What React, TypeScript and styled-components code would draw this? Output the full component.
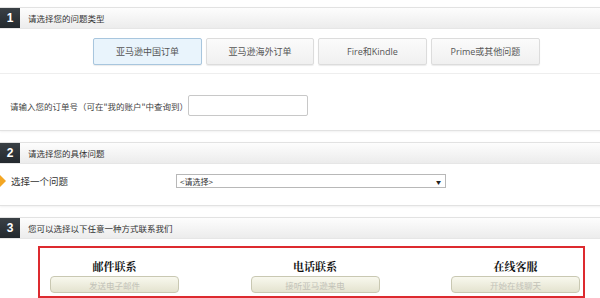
import React from 'react';
import styled, { createGlobalStyle } from 'styled-components';

const GlobalStyle = createGlobalStyle`
  html, body {
    margin: 0;
    padding: 0;
    background: #fff;
    overflow: hidden;
  }
  body {
    font-family: "Liberation Sans", "Noto Sans CJK SC", sans-serif;
    font-size: 10px;
    color: #333;
  }
`;

const Page = styled.div`
  width: 612px;
  padding-top: 7px;
  display: flex;
  flex-direction: column;
  row-gap: 11px;
`;

const Section = styled.div`
  border: 1px solid #e2e2e2;
  border-right: none;
  border-left: none;
  box-shadow: 0 1px 2px rgba(0, 0, 0, 0.06);
  background: #fff;
`;

const Header = styled.div`
  height: 20px;
  display: flex;
  align-items: center;
  background: linear-gradient(#fdfdfd, #ececec);
  border-bottom: 1px solid #e6e6e6;
`;

const Badge = styled.div`
  width: 20px;
  height: 20px;
  background: linear-gradient(#3a4045, #23292e);
  color: #fff;
  font-family: "Liberation Sans", sans-serif;
  font-weight: bold;
  font-size: 12px;
  display: flex;
  align-items: center;
  justify-content: center;
`;

const HeaderTitle = styled.div`
  margin-left: 8px;
  font-family: "Noto Sans CJK SC", sans-serif;
  font-size: 8.5px;
  color: #333;
  white-space: nowrap;
`;

const TypeRow = styled.div`
  display: flex;
  column-gap: 4px;
  padding: 9px 0 8px 93px;
  border-bottom: 1px solid #eee;
`;

const TypeButton = styled.div<{ $active?: boolean; $w: number }>`
  width: ${(p) => p.$w}px;
  height: 27px;
  box-sizing: border-box;
  display: flex;
  align-items: center;
  justify-content: center;
  border: 1px solid ${(p) => (p.$active ? '#a8c6de' : '#dcdcdc')};
  border-radius: 2px;
  background: ${(p) => (p.$active ? '#e9f4fc' : 'linear-gradient(#fbfbfb, #f0f0f0)')};
  box-shadow: 0 1px 1px rgba(0, 0, 0, 0.08);
  font-family: "Open Sans", "Noto Sans CJK SC", sans-serif;
  font-size: 9px;
  color: #555;
  white-space: nowrap;
`;

const OrderRow = styled.div`
  display: flex;
  align-items: center;
  padding: 21px 0 14px 10px;
`;

const Label = styled.div`
  font-family: "Noto Sans CJK SC", sans-serif;
  font-size: 8.5px;
  color: #444;
  width: 178px;
  white-space: nowrap;
`;

const TextInput = styled.div`
  width: 120px;
  height: 21px;
  box-sizing: border-box;
  border: 1px solid #c8c8c8;
  border-radius: 2px;
  background: #fff;
`;

const ProblemRow = styled.div`
  display: flex;
  align-items: center;
  padding: 10px 0 17px 0;
`;

const Arrow = styled.div`
  width: 0;
  height: 0;
  border-top: 6px solid transparent;
  border-bottom: 6px solid transparent;
  border-left: 6px solid #f3a623;
  margin-right: 5px;
`;

const ProblemLabel = styled.div`
  font-family: "Noto Sans CJK SC", sans-serif;
  font-size: 9.5px;
  color: #333;
  width: 165px;
  white-space: nowrap;
`;

const Select = styled.div`
  width: 270px;
  height: 14px;
  box-sizing: border-box;
  border: 1px solid #b8b8b8;
  display: flex;
  align-items: center;
  justify-content: space-between;
  padding: 0 4px 0 3px;
  font-family: "Noto Sans CJK SC", sans-serif;
  font-size: 8px;
  color: #333;
  background: #fff;
`;

const Caret = styled.span`
  font-size: 5px;
  color: #222;
`;

const ContactBody = styled.div`
  padding: 7px 0 0 38px;
`;

const RedBox = styled.div`
  width: 547px;
  height: 52px;
  box-sizing: border-box;
  border: 2px solid #dd2a2f;
  display: flex;
  justify-content: space-between;
  padding: 0 3px 0 10px;
`;

const ContactCol = styled.div`
  display: flex;
  flex-direction: column;
  align-items: center;
  padding-top: 10px;
`;

const ContactTitle = styled.div`
  font-family: "Noto Serif CJK SC", "Noto Sans CJK SC", serif;
  font-weight: bold;
  font-size: 11px;
  color: #111;
  height: 16px;
  line-height: 16px;
`;

const ContactButton = styled.div`
  margin-top: 2px;
  width: 129px;
  height: 17px;
  box-sizing: border-box;
  border: 1px solid #c9c8b2;
  border-radius: 4px;
  background: linear-gradient(#f8f8ee, #e4e3cf);
  display: flex;
  align-items: center;
  justify-content: center;
  font-family: "Noto Sans CJK SC", sans-serif;
  font-size: 8.5px;
  color: #c2c2b8;
`;

const types = [
  { name: '亚马逊中国订单', w: 109, active: true },
  { name: '亚马逊海外订单', w: 108 },
  { name: 'Fire和Kindle', w: 109 },
  { name: 'Prime或其他问题', w: 109 },
];

const contacts = [
  { title: '邮件联系', action: '发送电子邮件' },
  { title: '电话联系', action: '接听亚马逊来电' },
  { title: '在线客服', action: '开始在线聊天' },
];

export default function App() {
  return (
    <>
      <GlobalStyle />
      <Page>
        <Section>
          <Header>
            <Badge>1</Badge>
            <HeaderTitle>请选择您的问题类型</HeaderTitle>
          </Header>
          <TypeRow>
            {types.map((t) => (
              <TypeButton key={t.name} $w={t.w} $active={t.active}>
                {t.name}
              </TypeButton>
            ))}
          </TypeRow>
          <OrderRow>
            <Label>请输入您的订单号（可在"我的账户"中查询到）</Label>
            <TextInput />
          </OrderRow>
        </Section>

        <Section>
          <Header>
            <Badge>2</Badge>
            <HeaderTitle>请选择您的具体问题</HeaderTitle>
          </Header>
          <ProblemRow>
            <Arrow />
            <ProblemLabel>选择一个问题</ProblemLabel>
            <Select>
              <span>&lt;请选择&gt;</span>
              <Caret>▼</Caret>
            </Select>
          </ProblemRow>
        </Section>

        <Section>
          <Header>
            <Badge>3</Badge>
            <HeaderTitle>您可以选择以下任意一种方式联系我们</HeaderTitle>
          </Header>
          <ContactBody>
            <RedBox>
              {contacts.map((c) => (
                <ContactCol key={c.title}>
                  <ContactTitle>{c.title}</ContactTitle>
                  <ContactButton>{c.action}</ContactButton>
                </ContactCol>
              ))}
            </RedBox>
          </ContactBody>
        </Section>
      </Page>
    </>
  );
}
